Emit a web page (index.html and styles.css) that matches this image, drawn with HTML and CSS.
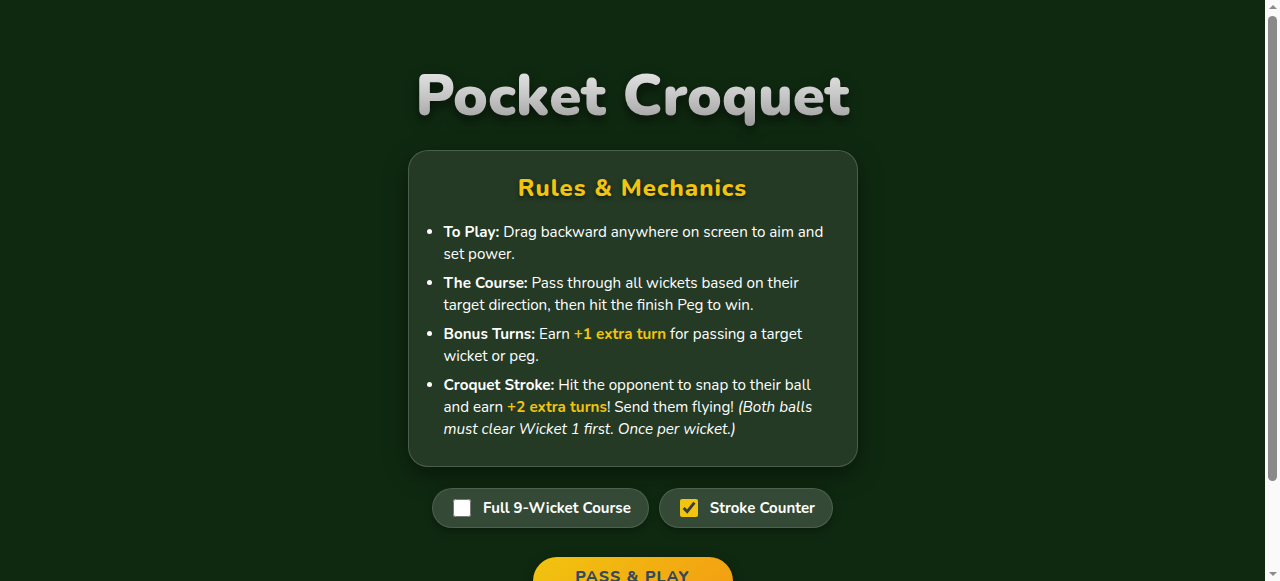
FILE: index.html
```html
<!DOCTYPE html>
<html lang="en">
<head>
  <meta charset="UTF-8">
  <meta name="viewport" content="width=device-width, initial-scale=1.0">
  <title>Pocket Croquet</title>
  <link rel="stylesheet" href="styles.css">
</head>
<body>
<div class="menu">
  <h1 class="title">Pocket Croquet</h1>
  <div class="rules">
    <h2>Rules &amp; Mechanics</h2>
    <ul>
      <li><strong>To Play:</strong> Drag backward anywhere on screen to aim and set power.</li>
      <li><strong>The Course:</strong> Pass through all wickets based on their target direction, then hit the finish Peg to win.</li>
      <li><strong>Bonus Turns:</strong> Earn <span class="gold">+1 extra turn</span> for passing a target wicket or peg.</li>
      <li><strong>Croquet Stroke:</strong> Hit the opponent to snap to their ball and earn <span class="gold">+2 extra turns</span>! Send them flying! <em>(Both balls must clear Wicket 1 first. Once per wicket.)</em></li>
    </ul>
  </div>
  <div class="options">
    <label class="option"><input type="checkbox" id="fullCourse"> Full 9-Wicket Course</label>
    <label class="option"><input type="checkbox" id="strokeCounter" checked> Stroke Counter</label>
  </div>
  <button class="play-btn">PASS &amp; PLAY</button>
</div>

<!-- window scrollbar, as it shows in the screenshot -->
<div class="scrollbar">
  <span class="arrow up"></span>
  <span class="thumb"></span>
  <span class="arrow down"></span>
</div>
</body>
</html>
```

FILE: styles.css
```css
body {
  margin: 0;
  padding: 0 15px 0 0;
  background-color: #0f2910;
  color: #fff;
  font-family: "Nunito", "Lato", "Noto Sans", sans-serif;
}
.menu {
  display: flex;
  flex-direction: column;
  align-items: center;
  padding: 64px 20px 78px;
}
.title {
  margin: 0 0 22px;
  font-size: 58px;
  font-weight: 900;
  line-height: 1.1;
  background: linear-gradient(180deg, #ececec 0%, #c6c6c6 50%, #999 100%);
  -webkit-background-clip: text;
  background-clip: text;
  color: transparent;
  filter: drop-shadow(0 5px 6px rgba(0,0,0,0.55));
}
.rules {
  box-sizing: border-box;
  width: 450px;
  padding: 20px;
  background-color: #243a25;
  border: 1px solid rgba(255,255,255,0.18);
  border-radius: 20px;
  box-shadow: 0 8px 24px rgba(0,0,0,0.4);
}
.rules h2 {
  margin: 1px 0 17px;
  text-align: center;
  font-size: 24px;
  font-weight: 800;
  letter-spacing: 1px;
  color: #f1c40f;
  text-shadow: 0 2px 4px rgba(0,0,0,0.5);
}
.rules ul {
  margin: 0;
  padding: 0 5px 0 15px;
}
.rules li {
  font-size: 15.2px;
  line-height: 22px;
  margin-bottom: 7px;
}
.rules li:last-child {
  margin-bottom: 6px;
}
.gold {
  color: #f1c40f;
  font-weight: bold;
}
.options {
  display: flex;
  gap: 10px;
  margin-top: 21px;
}
.option {
  display: flex;
  align-items: center;
  gap: 12px;
  height: 40px;
  box-sizing: border-box;
  padding: 0 17px 0 20px;
  background-color: #344a36;
  border: 1px solid rgba(255,255,255,0.12);
  border-radius: 20px;
  font-size: 15px;
  font-weight: bold;
  cursor: pointer;
  box-shadow: 0 3px 8px rgba(0,0,0,0.3);
}
.option input {
  width: 18px;
  height: 18px;
  margin: 0;
  accent-color: #f1c40f;
}
.play-btn {
  margin-top: 29px;
  width: 200px;
  padding: 9px 0 17px;
  border: none;
  border-radius: 24px;
  background: linear-gradient(135deg, #f1c40f, #f39c12);
  color: #34495e;
  font-family: "Nunito", "Lato", sans-serif;
  font-size: 16px;
  line-height: 22px;
  font-weight: 800;
  letter-spacing: 1px;
  cursor: pointer;
  box-shadow: 0 4px 12px rgba(0,0,0,0.4);
}
.scrollbar {
  position: fixed;
  top: 0;
  right: 0;
  width: 15px;
  height: 100%;
  background-color: #fafafa;
  display: flex;
  flex-direction: column;
  align-items: center;
}
.arrow {
  width: 0;
  height: 0;
  border-left: 4px solid transparent;
  border-right: 4px solid transparent;
}
.arrow.up {
  margin-top: 5px;
  border-bottom: 4px solid #8a8a8a;
}
.arrow.down {
  margin-top: auto;
  margin-bottom: 5px;
  border-top: 4px solid #8a8a8a;
}
.thumb {
  margin-top: 7px;
  width: 9px;
  height: 465px;
  border-radius: 5px;
  background-color: #8a8a8a;
}
```
